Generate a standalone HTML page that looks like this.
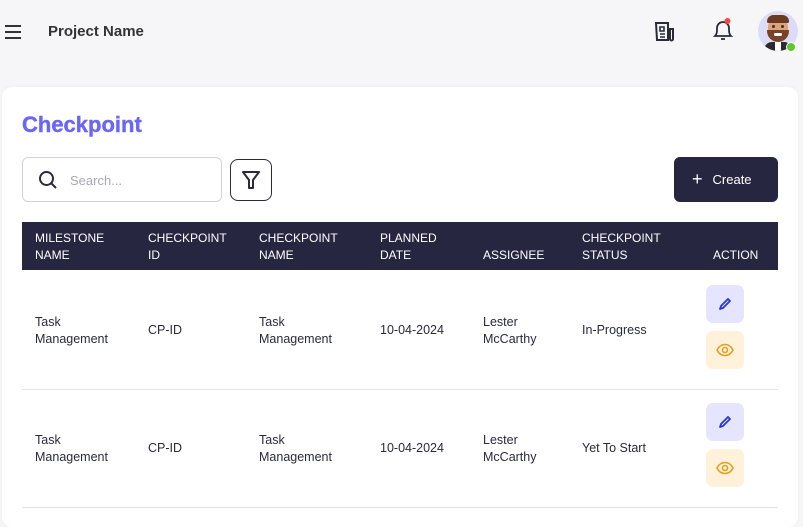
<!DOCTYPE html>
<html><head><style>
*{box-sizing:border-box;margin:0;padding:0}
body{width:803px;height:508px;overflow:hidden;background:#f6f6f9;font-family:"Liberation Sans",sans-serif;position:relative;color:#2a2a3a}
.abs{position:absolute}
.card{left:2px;top:87px;width:796px;height:440px;background:#fff;border-radius:10px;box-shadow:0 0 4px rgba(0,0,0,.05)}
.hdr{left:22px;top:222px;width:756px;height:48px;background:#262640}
.h{color:#fff;font-size:12px;line-height:17px;position:absolute;top:230px;font-weight:500}
.c{color:#2a2a3a;font-size:12.5px;line-height:17px;position:absolute}
.line{left:22px;width:756px;height:1px;background:#e3e3ea}
.btn{width:38px;height:38px;border-radius:7px;display:flex;align-items:center;justify-content:center}
</style></head><body>
<svg class="abs" style="left:4px;top:24px" width="18" height="16"><path d="M1 2h16M1 8h16M1 14h16" stroke="#333" stroke-width="2"/></svg>
<div class="abs" style="left:48px;top:23px;font-size:15px;font-weight:bold;color:#333">Project Name</div>
<svg class="abs" style="left:654px;top:21px" width="22" height="22" viewBox="0 0 22 22" fill="none" stroke="#2a2a3a" stroke-width="2"><path d="M2 2h12v17H3z M14 8h5v10a1.5 1.5 0 0 1-3 0V8"/><path d="M6 6h4v4H6zM6 13h5M6 16h5" stroke-width="1.6"/></svg>
<svg class="abs" style="left:711px;top:17px" width="24" height="26" viewBox="0 0 24 26" fill="none" stroke="#2a2a3a" stroke-width="1.8"><path d="M4 19c2-2 2-4 2-8a6 6 0 0 1 12 0c0 4 0 6 2 8z M10 22h4"/><circle cx="16.5" cy="4" r="3" fill="#f44" stroke="none"/></svg>
<div class="abs" style="left:758px;top:11px;width:40px;height:40px;border-radius:50%;background:#dcdcf6;overflow:hidden">
<div class="abs" style="left:10px;top:7px;width:20px;height:22px;border-radius:9px;background:#e0a27a"></div>
<div class="abs" style="left:9px;top:4px;width:22px;height:8px;border-radius:9px 9px 2px 2px;background:#6b3a22"></div>
<div class="abs" style="left:14px;top:14px;width:3px;height:3px;border-radius:50%;background:#333"></div>
<div class="abs" style="left:23px;top:14px;width:3px;height:3px;border-radius:50%;background:#333"></div>
<div class="abs" style="left:9px;top:19px;width:22px;height:12px;border-radius:0 0 11px 11px;background:#7a4328"></div>
<div class="abs" style="left:16px;top:22px;width:8px;height:3px;border-radius:2px;background:#fff"></div>
<div class="abs" style="left:6px;top:31px;width:28px;height:12px;border-radius:8px 8px 0 0;background:#2a2a30"></div>
<div class="abs" style="left:17px;top:31px;width:6px;height:10px;background:#fff"></div>
</div>
<div class="abs" style="left:786px;top:42px;width:10px;height:10px;border-radius:50%;background:#5cc82d;border:1.5px solid #fff"></div>
<div class="abs card"></div>
<div class="abs" style="left:22px;top:112px;font-size:22px;font-weight:bold;color:#6b66f5;-webkit-text-stroke:0.4px #6b66f5">Checkpoint</div>
<div class="abs" style="left:22px;top:157px;width:200px;height:45px;border:1px solid #d4d4d8;border-radius:6px"></div>
<svg class="abs" style="left:38px;top:170px" width="20" height="20" fill="none" stroke="#2a2a3a" stroke-width="2"><circle cx="8.5" cy="8.5" r="6.5"/><path d="M13.5 13.5l4.5 4.5"/></svg>
<div class="abs" style="left:70px;top:173px;font-size:13px;color:#a8a8b0">Search...</div>
<div class="abs" style="left:230px;top:159px;width:42px;height:42px;border:1.5px solid #2a2a3a;border-radius:8px"></div>
<svg class="abs" style="left:241px;top:170px" width="20" height="20" fill="none" stroke="#2a2a3a" stroke-width="2" stroke-linejoin="round"><path d="M2 2h16l-6 8v8h-4v-8z"/></svg>
<div class="abs" style="left:674px;top:157px;width:104px;height:45px;background:#262640;border-radius:6px;color:#fff;font-size:13px;line-height:45px;padding-left:18px"><span style="font-size:18px;vertical-align:-1px;margin-right:10px">+</span>Create</div>
<div class="abs hdr"></div>
<div class="h" style="left:35px">MILESTONE<br>NAME</div>
<div class="h" style="left:148px">CHECKPOINT<br>ID</div>
<div class="h" style="left:259px">CHECKPOINT<br>NAME</div>
<div class="h" style="left:380px">PLANNED<br>DATE</div>
<div class="h" style="left:483px;top:247px">ASSIGNEE</div>
<div class="h" style="left:582px">CHECKPOINT<br>STATUS</div>
<div class="h" style="left:713px;top:247px">ACTION</div>
<div class="abs line" style="top:389px"></div>
<div class="abs line" style="top:507px"></div>
<div class="c" style="left:35px;top:314px">Task<br>Management</div>
<div class="c" style="left:148px;top:322px">CP-ID</div>
<div class="c" style="left:259px;top:314px">Task<br>Management</div>
<div class="c" style="left:380px;top:322px">10-04-2024</div>
<div class="c" style="left:483px;top:314px">Lester<br>McCarthy</div>
<div class="c" style="left:582px;top:322px">In-Progress</div>
<div class="c" style="left:35px;top:432px">Task<br>Management</div>
<div class="c" style="left:148px;top:440px">CP-ID</div>
<div class="c" style="left:259px;top:432px">Task<br>Management</div>
<div class="c" style="left:380px;top:440px">10-04-2024</div>
<div class="c" style="left:483px;top:432px">Lester<br>McCarthy</div>
<div class="c" style="left:582px;top:440px">Yet To Start</div>
<div class="abs btn" style="left:706px;top:285px;background:#e5e5ff"><svg width="16" height="16" fill="none" stroke="#2436e6" stroke-width="1.8" stroke-linejoin="round"><path d="M3 13l1-3 7-7 2 2-7 7z"/></svg></div>
<div class="abs btn" style="left:706px;top:331px;background:#fff1da"><svg width="18" height="14" fill="none" stroke="#e0a020" stroke-width="1.6"><path d="M1 7c2-4 5-5.5 8-5.5s6 1.5 8 5.5c-2 4-5 5.5-8 5.5S3 11 1 7z"/><circle cx="9" cy="7" r="2.5"/></svg></div>
<div class="abs btn" style="left:706px;top:403px;background:#e5e5ff"><svg width="16" height="16" fill="none" stroke="#2436e6" stroke-width="1.8" stroke-linejoin="round"><path d="M3 13l1-3 7-7 2 2-7 7z"/></svg></div>
<div class="abs btn" style="left:706px;top:449px;background:#fff1da"><svg width="18" height="14" fill="none" stroke="#e0a020" stroke-width="1.6"><path d="M1 7c2-4 5-5.5 8-5.5s6 1.5 8 5.5c-2 4-5 5.5-8 5.5S3 11 1 7z"/><circle cx="9" cy="7" r="2.5"/></svg></div>
</body></html>
